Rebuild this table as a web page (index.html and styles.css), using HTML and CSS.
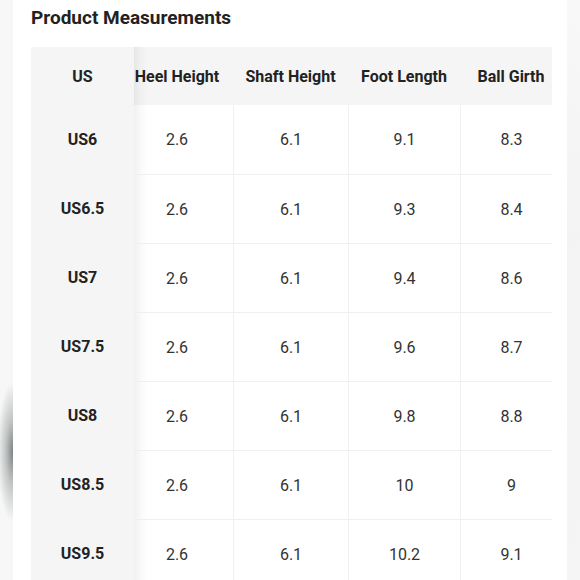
FILE: index.html
```html
<!DOCTYPE html>
<html>
<head>
<meta charset="utf-8">
<link rel="stylesheet" href="styles.css">
</head>
<body>
<div class="page">
  <div class="edge edge-left"></div>
  <main class="main">
    <h1 class="title">Product Measurements</h1>
    <div class="table">
      <div class="cell head first">US</div>
      <div class="cell head heel">Heel Height</div>
      <div class="cell head">Shaft Height</div>
      <div class="cell head">Foot Length</div>
      <div class="cell head ball">Ball Girth</div>

      <div class="cell first">US6</div>
      <div class="cell heel top0">2.6</div>
      <div class="cell vl top0">6.1</div>
      <div class="cell vl top0">9.1</div>
      <div class="cell vl ball top0">8.3</div>

      <div class="cell first">US6.5</div>
      <div class="cell heel">2.6</div>
      <div class="cell vl">6.1</div>
      <div class="cell vl">9.3</div>
      <div class="cell vl ball">8.4</div>

      <div class="cell first">US7</div>
      <div class="cell heel">2.6</div>
      <div class="cell vl">6.1</div>
      <div class="cell vl">9.4</div>
      <div class="cell vl ball">8.6</div>

      <div class="cell first">US7.5</div>
      <div class="cell heel">2.6</div>
      <div class="cell vl">6.1</div>
      <div class="cell vl">9.6</div>
      <div class="cell vl ball">8.7</div>

      <div class="cell first">US8</div>
      <div class="cell heel">2.6</div>
      <div class="cell vl">6.1</div>
      <div class="cell vl">9.8</div>
      <div class="cell vl ball">8.8</div>

      <div class="cell first">US8.5</div>
      <div class="cell heel">2.6</div>
      <div class="cell vl">6.1</div>
      <div class="cell vl">10</div>
      <div class="cell vl ball">9</div>

      <div class="cell first">US9.5</div>
      <div class="cell heel">2.6</div>
      <div class="cell vl">6.1</div>
      <div class="cell vl">10.2</div>
      <div class="cell vl ball">9.1</div>
    </div>
  </main>
  <div class="edge edge-right"></div>
</div>
</body>
</html>
```
FILE: styles.css
```css
html, body {
  margin: 0;
  padding: 0;
  background: #ffffff;
}
body {
  font-family: Roboto, "Liberation Sans", sans-serif;
  color: #222;
  overflow: hidden;
}
.page {
  display: flex;
  width: 580px;
  height: 580px;
  overflow: hidden;
}
.edge {
  width: 13px;
  flex: none;
  height: 580px;
}
.edge-left {
  background:
    radial-gradient(ellipse 16px 70px at 13px 452px, rgba(118,124,124,0.95) 0%, rgba(150,154,154,0.55) 45%, rgba(247,247,247,0) 100%),
    #f7f7f7;
}
.edge-right {
  background: linear-gradient(#f8f8f8, #f3f3f3 40%, #f5f5f5);
}
.main {
  flex: none;
  width: 554px;
  padding-left: 18px;
  box-sizing: border-box;
}
.title {
  margin: 5px 0 17px 0;
  font-size: 19px;
  line-height: 25px;
  font-weight: 700;
  color: #222;
}
.table {
  display: grid;
  grid-template-columns: 103px 99px 115px 112px 92px;
  grid-template-rows: 58px repeat(7, 69px);
  width: 521px;
}
.cell {
  display: flex;
  align-items: center;
  justify-content: center;
  font-size: 16px;
  color: #333;
  border-top: 1px solid #f0f0f0;
  box-sizing: border-box;
}
.cell.top0 {
  border-top: none;
}
.cell.head {
  background-color: #f5f5f5;
  font-weight: 700;
  color: #222;
  border-top: none;
}
.cell.first {
  background: #f5f5f5;
  font-weight: 700;
  color: #222;
  border-top: none;
}
.cell.vl {
  border-left: 1px solid #f0f0f0;
}
.cell.heel {
  padding-right: 13px;
  background-image: linear-gradient(to right, rgba(0,0,0,0.06), rgba(0,0,0,0.02) 7px, rgba(0,0,0,0) 14px);
}
.cell.ball {
  padding-left: 10px;
}
```
